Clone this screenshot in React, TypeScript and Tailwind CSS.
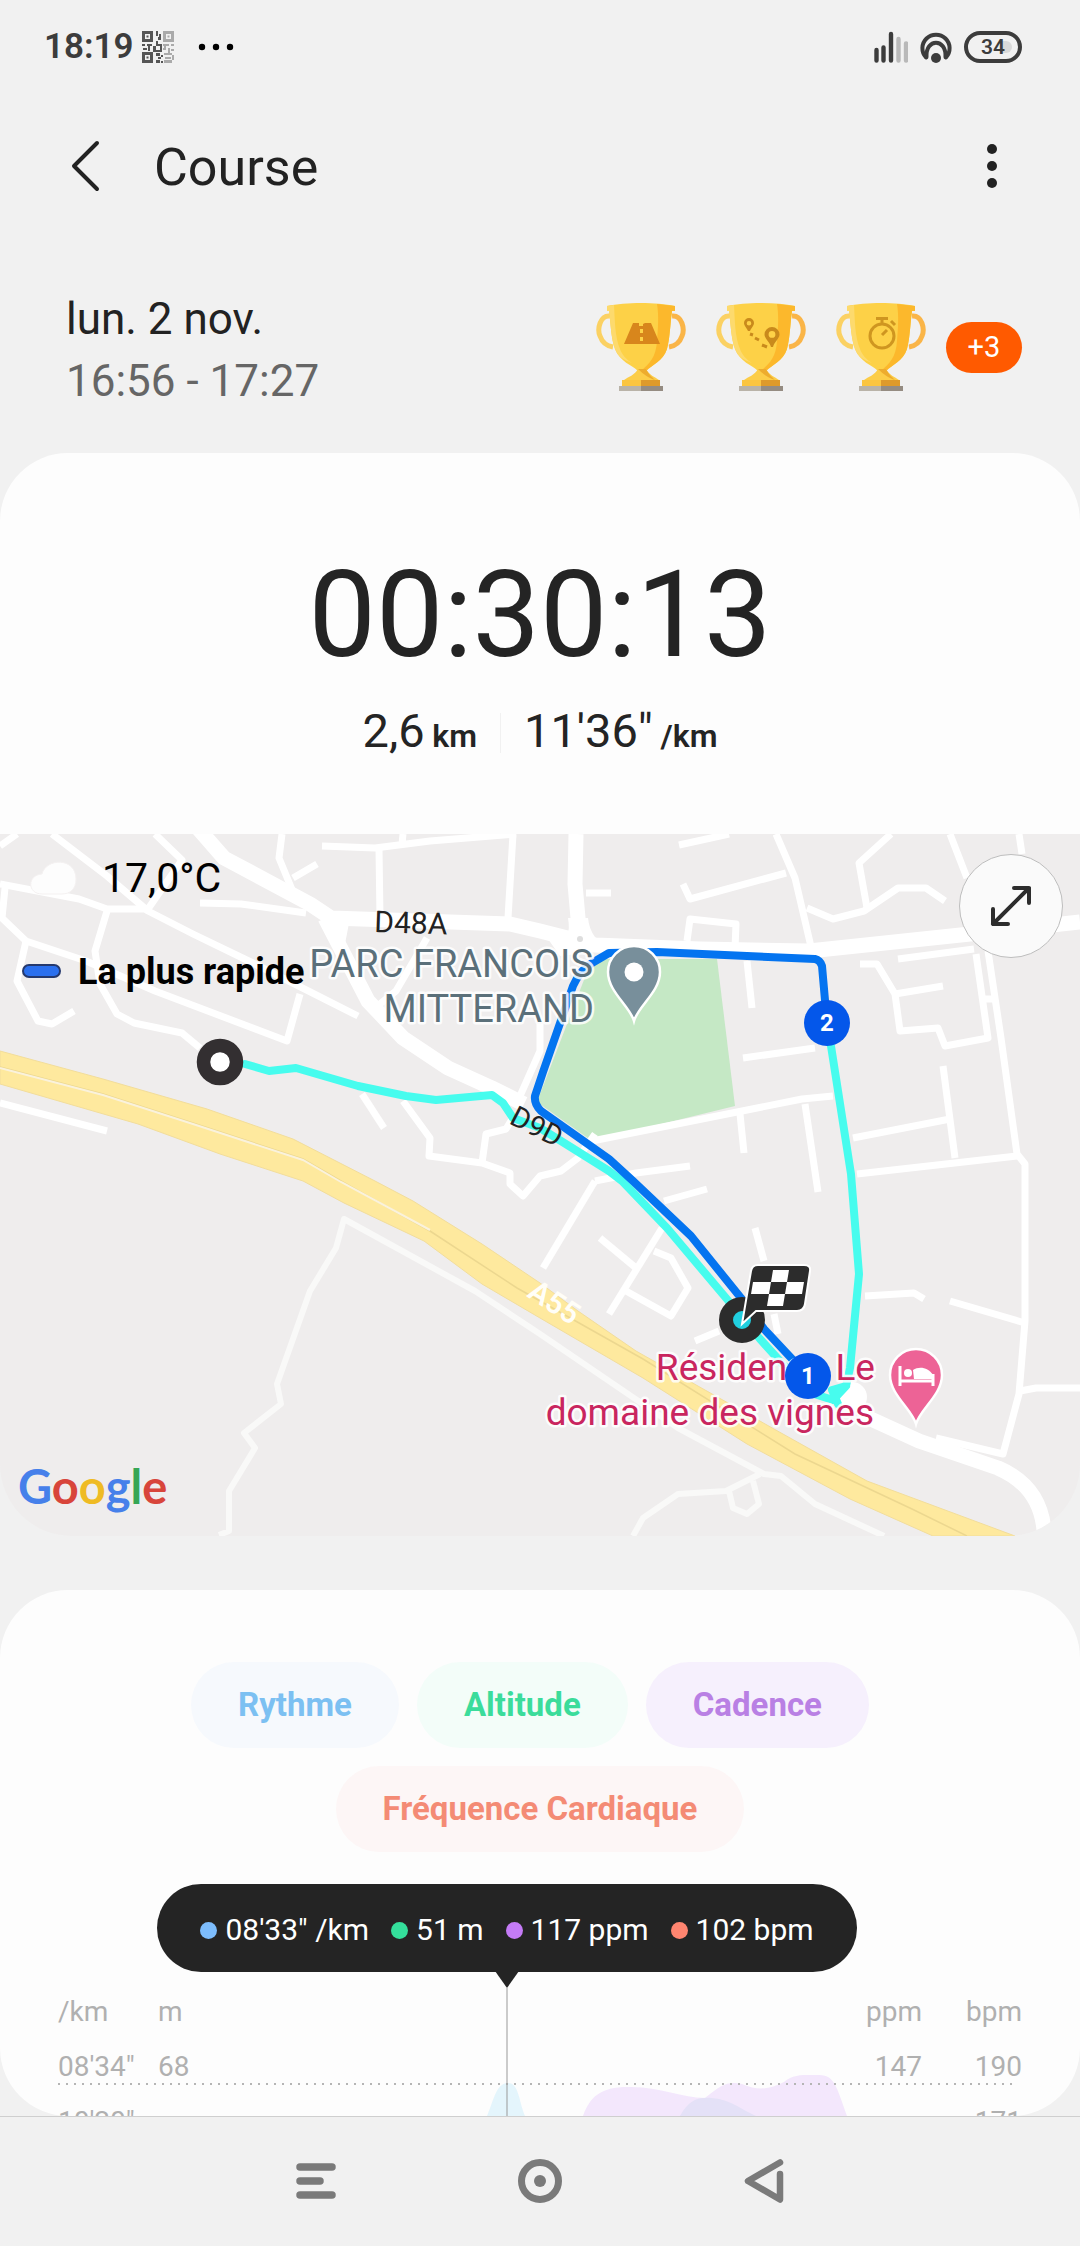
import { useState, type ReactNode } from "react";

type Emblem = "road" | "route" | "timer";

const emblems: Record<Emblem, ReactNode> = {
  road: (
    <path
      fill="#d8861c"
      d="M37 20h6v3h4v-2l2-1h6l9 21H28zM44 26v4h3v-4zM44 34v4h3v-4z"
      fillRule="evenodd"
    />
  ),
  route: (
    <g fill="#c98a1c">
      <path
        fillRule="evenodd"
        d="M33 15a5 5 0 0 1 5 5c0 3-3 5-4 8h-2c-1-3-4-5-4-8a5 5 0 0 1 5-5zm0 3a2.300 2.300 0 1 0 0 4.600 2.300 2.300 0 0 0 0-4.600z"
      />
      <path
        fillRule="evenodd"
        d="M56 24a7.500 7.500 0 0 1 7.500 7.500c0 4-5 7-6.500 12.500h-2c-1.500-5.500-6.500-8.500-6.500-12.500A7.500 7.500 0 0 1 56 24zm0 4a3.400 3.400 0 1 0 0 6.800 3.400 3.400 0 0 0 0-6.800z"
      />
      <path d="M34 31l3 1M39 35l4 2M46 42l5 2" stroke="#c98a1c" strokeWidth="3" />
    </g>
  ),
  timer: (
    <g fill="none" stroke="#cf9620" strokeWidth="3">
      <circle cx="46" cy="33" r="12" />
      <path d="M40 15.500h12M46 16v5M55 18l4 4M46 32l5-5" />
    </g>
  ),
};

function Trophy({ emblem }: { emblem: Emblem }) {
  return (
    <svg viewBox="0 0 90 88" className="w-[90px] h-[88px]" aria-hidden="true">
      <g fill="none" strokeWidth="5">
        <path d="M14 13C4 12 1 26 4 33c2 6 7 10 13 11" stroke="#fbd162" />
        <path d="M76 13c10-1 13 13 10 20-2 6-7 10-13 11" stroke="#fab548" />
      </g>
      <path d="M11 3C30-1 60-1 79 3v5h-3c-2 15-2 27-5 38-4 12-15 16-21 22h-8c-6-6-18-9-23-22-4-11-4-23-6-38h-2z" fill="#fdd147" />
      <path d="M11 3l7-1c1 18 1 32 6 44 2 6 7 11 12 14-8-3-14-6-17-14C15 35 15 23 13 8h-2z" fill="#fdda6d" />
      <path d="M61 1l18 2v5h-3c-2 15-2 27-5 38-4 12-15 16-21 22h-5c9-8 15-14 16-30 1-12 2-25 0-37z" fill="#fcb82c" />
      <path d="M42 66h8c3 6 9 8 13 11H28c4-3 11-5 14-11z" fill="#fccd48" />
      <path d="M42 66h8c3 6 6 8 9 11-6-2-11-5-17-11z" fill="#edac2e" />
      <path d="M26 77h19v6H26z" fill="#fbc540" />
      <path d="M45 77h19v6H45z" fill="#de9a2b" />
      <path d="M23 83h22v5H23z" fill="#b9b3a8" />
      <path d="M45 83h22v5H45z" fill="#958c82" />
      {emblems[emblem]}
    </svg>
  );
}

function QrIcon() {
  return (
    <svg viewBox="0 0 32 32" className="w-8 h-8" aria-hidden="true">
      <g fill="none" strokeWidth="3">
        <path d="M1.500 1.500h8v8h-8zM1.500 22.500h8v8h-8z" stroke="#555" />
        <path d="M22.500 1.500h8v8h-8z" stroke="#aaa" />
      </g>
      <path d="M4.500 4.500h2v2h-2zM4.500 25.500h2v2h-2z" fill="#555" />
      <path d="M25.500 4.500h2v2h-2z" fill="#aaa" />
      <path
        d="M14 0h2v5h-2zM17 3h2v6h-3v-3h1zM0 13h3v2H0zM1 17h4v2H1zM5 13h5v2H8v5H6v-5H5zM11 15h3v4h4v-4h-4v-2h6v8h-9zM14 10h2v3h-2zM14 22h4v3h-4zM16 26h3v2h-3zM14 29h4v3h-4zM19 24h2v2h-2zM19 30h2v2h-2z"
        fill="#555"
      />
      <path
        d="M21 13h6v2h-3v4h-3v-2h1v-2h-1zM29 13h3v2h-3zM26 17h2v5h-2zM29 18h3v2h-3zM22 22h8v2h-8zM30 24h2v5h-2zM23 26h6v2h-6zM22 29h8v3h-8z"
        fill="#aaa"
      />
    </svg>
  );
}

function StatusBar() {
  return (
    <div className="flex items-center justify-between px-11 pt-[27px] h-[67px]">
      <div className="flex items-center">
        <span className="text-[35px] leading-10 font-semibold text-[#3c3c3c]">18:19</span>
        <span className="ml-2">
          <QrIcon />
        </span>
        <svg viewBox="0 0 36 8" className="w-9 h-2 ml-6" aria-hidden="true">
          <circle cx="4" cy="4" r="3.200" />
          <circle cx="18" cy="4" r="3.200" />
          <circle cx="32" cy="4" r="3.200" />
        </svg>
      </div>
      <div className="flex items-center gap-3 mr-[14px]">
        <svg viewBox="0 0 34 32" className="w-[34px] h-8" aria-hidden="true">
          <g strokeWidth="4.400" strokeLinecap="round" stroke="#3c3c3c">
            <path d="M2.500 19v10.500M9.500 16.500v13M17 3v26.500" />
            <path d="M24.500 8v21.500M32 12.500v17" stroke="#b9b9b9" />
          </g>
        </svg>
        <svg viewBox="0 0 32 32" className="w-8 h-8" aria-hidden="true">
          <g fill="none" stroke="#3c3c3c" strokeWidth="4" strokeLinecap="round">
            <path d="M6 26.500A13.600 13.600 0 1 1 26 26.500" />
            <path d="M6.500 26C5.500 7 26.500 7 25.500 26" />
          </g>
          <circle cx="16" cy="27" r="5" fill="#3c3c3c" />
        </svg>
        <div className="relative flex items-center justify-center w-[58px] h-8 rounded-full border-4 border-[#3c3c3c]">
          <span className="absolute right-1.5 w-3 h-3 rounded-r-full bg-[#d9d9d9]" />
          <span className="relative text-[21px] leading-6 font-semibold text-[#3c3c3c]">34</span>
        </div>
      </div>
    </div>
  );
}

function Header() {
  return (
    <header className="flex items-center px-[62px] py-[68px] h-[198px] text-[#222]">
      <button aria-label="Retour" className="w-[46px] h-16 flex items-center">
        <svg viewBox="0 0 46 56" className="w-[46px] h-14" fill="none" aria-hidden="true">
          <path d="M35 5L12 28l23 23" stroke="#222" strokeWidth="4" strokeLinecap="round" strokeLinejoin="round" />
        </svg>
      </button>
      <h1 className="ml-[46px] pt-1 text-[52px] leading-[60px]">Course</h1>
      <button aria-label="Plus d'options" className="ml-auto w-[52px] h-16 flex items-center justify-center">
        <svg viewBox="0 0 12 46" className="w-3 h-[46px]" fill="#222" aria-hidden="true">
          <circle cx="6" cy="6" r="5" />
          <circle cx="6" cy="23" r="5" />
          <circle cx="6" cy="40" r="5" />
        </svg>
      </button>
    </header>
  );
}

const minorRoads = [
  "M52 0L107 42L148 77L193 100L255 130L358 182",
  "M0 50L79 65L107 75L148 75L182 26L155 0",
  "M107 77L95 117L100 150L117 180L134 189L182 199L200 214",
  "M5 54L2 84L26 107L86 127L155 157L287 207L300 160",
  "M26 107L17 147L38 187L52 190L74 177",
  "M0 12L17 0",
  "M282 0L279 24L293 58M293 44L317 30",
  "M200 69L241 70L306 79",
  "M322 12L375 14L430 7L516 0M402 10L403 0",
  "M379 15L380 84M513 0L508 84",
  "M427 104L396 157L375 174",
  "M540 190L540 217L520 262",
  "M362 260L384 294",
  "M403 267L430 304L429 322L482 329L510 339L510 350L523 362L540 342L561 337L578 324L595 300",
  "M482 329L486 300L506 295L514 282",
  "M0 269L107 297",
  "M679 11L729 0",
  "M683 50L690 65L786 39",
  "M776 0L795 44L812 117",
  "M807 74L833 85L864 77L898 54L926 54L945 67",
  "M891 0L859 29L867 74",
  "M950 0L967 44M1019 0L1022 20",
  "M586 59L611 59",
  "M687 107L690 85L736 90L735 114",
  "M747 127L752 174",
  "M860 130L877 130L895 160L943 152M895 160L900 197L938 194L945 212L988 204L976 120M898 125L974 115",
  "M988 117L1001 204L1017 320L1025 330L1025 487L1019 560L1003 620L936 604",
  "M984 165L996 165",
  "M1020 557L1036 554L1080 554",
  "M743 224L815 214",
  "M592 307L802 265L833 262",
  "M740 280L744 319M805 270L818 358",
  "M853 304L950 285M943 232L955 324M857 340L1017 322",
  "M595 347L636 339L690 332",
  "M595 347L543 434",
  "M664 367L707 355M662 394L609 480M600 404L636 434",
  "M654 417L671 424L688 454L671 482L626 457",
  "M755 394L764 427M774 480L778 500M695 507L719 497",
  "M865 462L914 459L924 465M950 467L1025 489",
];

const tracks = [
  "M219 701L229 697L229 657L255 614L244 599L281 570L277 550L310 457L336 414L344 385L475 457L540 500L678 594L764 640L781 642L815 670L884 702",
  "M633 702L643 684L678 660L726 657L760 640M729 657L733 674L747 680L759 670L753 647",
];

const arterials = [
  "M196 -8L224 24L310 70L331 84L510 90L540 97L595 111L700 115L809 117L970 100L1080 88",
  "M325 84L368 167L403 204L448 234L492 254L524 270",
  "M576 0L575 50L581 118",
  "M860 580L919 607L998 634Q1040 652 1044 696",
];

const halo = {
  stroke: "#ffffff",
  strokeWidth: 5,
  strokeOpacity: 0.85,
  paintOrder: "stroke" as const,
  strokeLinejoin: "round" as const,
};

function PlacePin({ x, y, color, children }: { x: number; y: number; color: string; children: ReactNode }) {
  return (
    <g transform={`translate(${x} ${y})`}>
      <path
        d="M0 49C-4 34-26 20-26 0a26 26 0 0 1 52 0C26 20 4 34 0 49z"
        fill={color}
        stroke="#fff"
        strokeWidth="2.500"
      />
      {children}
    </g>
  );
}

function KmMarker({ x, y, label }: { x: number; y: number; label: string }) {
  return (
    <g>
      <circle cx={x} cy={y} r="23" fill="#0457ea" />
      <text x={x} y={y + 8} textAnchor="middle" fontSize="24" fontWeight="700" fill="#fff">
        {label}
      </text>
    </g>
  );
}

function RouteMap() {
  return (
    <svg viewBox="0 0 1080 702" className="block w-full" role="img" aria-label="Carte du parcours">
      <rect width="1080" height="702" fill="#efeded" />

      {/* park */}
      <path d="M592 125L717 125L735 272L592 307L537 268z" fill="#c5e8c5" />

      {/* streets */}
      <g fill="none" stroke="#fff" strokeLinejoin="round">
        {tracks.map((d) => (
          <path key={d} d={d} strokeWidth="6" stroke="#f9f9f8" />
        ))}
        {minorRoads.map((d) => (
          <path key={d} d={d} strokeWidth="7" />
        ))}
        {arterials.map((d) => (
          <path key={d} d={d} strokeWidth="15" />
        ))}
      </g>
      <path d="M568 84Q573 112 548 105L560 122L612 116Q590 106 588 84z" fill="#fff" />
      <path d="M320 78L350 84L345 110z" fill="#fff" />
      <circle cx="580" cy="105" r="3" fill="#dedede" />
      <circle cx="852" cy="563" r="15" fill="#fff" />

      {/* motorway */}
      <path
        d="M0 217L103 245L207 275L293 305L375 347L413 367L482 410L540 449L578 477L636 517L774 595L867 647L1015 702L933 702L850 665L747 610L643 544L540 484L482 450L424 407L344 369L303 347L220 320L138 290L0 250z"
        fill="#fee99e"
        stroke="#f2dd9b"
        strokeWidth="1"
      />
      <path
        d="M0 233L103 260L193 289L303 325L341 347L430 397L517 454L643 525L795 620L912 675L967 702"
        fill="none"
        stroke="#ecd78f"
        strokeWidth="1.500"
      />
      <path d="M0 234L103 261L193 290L303 326L341 348L430 396" fill="none" stroke="#faf2dc" strokeWidth="2" />
      <text transform="translate(526 462) rotate(33)" fontSize="30" fontWeight="600" fill="#fffef8">
        A55
      </text>

      {/* recorded track */}
      <g fill="none" strokeWidth="8" strokeLinejoin="round" strokeLinecap="round">
        <path
          d="M245 230L269 237L296 234L358 252L406 262L436 266L492 261L503 269L513 284L540 294L561 307L609 337L622 347L667 394L726 464L760 505L808 558L833 566L846 552M831 212L851 340L859 440L850 534L846 552L832 556L838 570"
          stroke="#47fcee"
        />
        <path
          d="M827 189L822 132Q820 126 815 125L657 118L609 119L592 129Q580 136 573 152L543 238L535 262Q534 270 541 277L609 325L633 347L691 402L741 464L764 495L808 542"
          stroke="#0474f0"
        />
      </g>

      <text transform="translate(374 98) rotate(2)" fontSize="30" fill="#222">
        D48A
      </text>
      <text transform="translate(508 289) rotate(27)" fontSize="29" fill="#222">
        D9D
      </text>
      <g fontSize="38" textAnchor="end" fill="#5b707a" {...halo}>
        <text x="593" y="143">PARC FRANCOIS</text>
        <text x="594" y="188">MITTERAND</text>
      </g>
      <g fontSize="37" textAnchor="end" fill="#c9265f" {...halo}>
        <text x="875" y="546">Résidence Le</text>
        <text x="874" y="591">domaine des vignes</text>
      </g>

      <PlacePin x={634} y={138} color="#788f9b">
        <circle r="9.500" fill="#fff" />
      </PlacePin>
      <PlacePin x={916} y={541} color="#ed6396">
        <path d="M-16-9v20M17-1v12M-17 6h35" stroke="#fff" strokeWidth="3" />
        <path d="M-3-5C3-9 12-8 17 0v4H-2z" fill="#fff" />
        <circle cx="-8" cy="-2" r="4" fill="#fff" />
      </PlacePin>

      <circle cx="220" cy="228" r="16.500" fill="#fff" stroke="#332f31" strokeWidth="13.500" />

      {/* finish flag */}
      <circle cx="742" cy="486" r="16" fill="#21cfdf" stroke="#2c2c2c" strokeWidth="14" />
      <path
        d="M742 490L751 437Q752 431 758 431L804 431Q811 431 810 437L805 470Q804 477 797 477L756 477z"
        fill="#2c2c2c"
        stroke="#fff"
        strokeWidth="2"
      />
      <path
        d="M773 436h16l-2 12h-16zM753 448h18l-2 12h-18zM787 448h17l-2 12h-17zM769 460h16l-2 12h-16z"
        fill="#fff"
      />
      <KmMarker x={827} y={189} label="2" />
      <KmMarker x={808} y={542} label="1" />
    </svg>
  );
}

function MapSection() {
  return (
    <section className="relative overflow-hidden rounded-b-[72px]">
      <RouteMap />
      <div className="absolute top-0 left-0 pt-5 pl-[22px]">
        <div className="flex items-center">
          <svg viewBox="0 0 48 34" className="w-12 h-[34px] ml-2" aria-hidden="true">
            <path
              d="M12 33C-3 33-3 14 12 13C16-3 46-4 46 18C46 28 40 33 32 33z"
              fill="#fdfdfd"
              stroke="#f4f1f1"
            />
          </svg>
          <span className="ml-6 text-[41px] leading-[48px] text-black">17,0°C</span>
        </div>
        <div className="flex items-center mt-12">
          <span className="w-[39px] h-[14px] rounded-full border-2 border-[#25396e] bg-[#2b70ee]" />
          <span className="ml-[17px] pt-0.5 text-[36px] leading-[40px] font-bold text-black">La plus rapide</span>
        </div>
      </div>
      <button
        aria-label="Agrandir la carte"
        className="absolute top-5 right-[17px] w-[104px] h-[104px] rounded-full border border-[#bdbdbd] bg-[#fafafa] flex items-center justify-center"
      >
        <svg viewBox="0 0 42 42" className="w-[42px] h-[42px]" fill="none" aria-hidden="true">
          <path
            d="M3 39L39 3M24 3h15v15M3 24v15h15"
            stroke="#2d2d2d"
            strokeWidth="4"
            strokeLinecap="round"
            strokeLinejoin="round"
          />
        </svg>
      </button>
      <a
        href="#google"
        aria-label="Google"
        className="absolute left-[18px] bottom-5 text-[47px] leading-[60px] font-bold font-['Lato',sans-serif]"
      >
        <span className="text-[#4680ea]">G</span>
        <span className="text-[#d8453b]">o</span>
        <span className="text-[#efbb24]">o</span>
        <span className="text-[#4680ea]">g</span>
        <span className="text-[#36a655]">l</span>
        <span className="text-[#d8453b]">e</span>
      </a>
    </section>
  );
}

function Summary() {
  return (
    <section className="rounded-t-[68px] bg-[#fdfdfd] pt-[92px] pb-[66px] h-[381px] text-[#242424]">
      <div className="text-center text-[120px] leading-[140px]">00:30:13</div>
      <div className="flex justify-center items-center mt-4 h-16">
        <p className="text-[47px] leading-[60px]">
          2,6 <span className="-ml-1 text-[32px] font-semibold">km</span>
        </p>
        <span className="w-px h-10 mx-[23px] bg-[#f1f1f1]" />
        <p className="text-[47px] leading-[60px]">
          11'36" <span className="-ml-1 text-[32px] font-semibold">/km</span>
        </p>
      </div>
    </section>
  );
}

const series = [
  { label: "Rythme", pill: "bg-[#f6f9fd] text-[#7cc0f2]", dot: "bg-[#7dbdfd]", value: "08'33\" /km" },
  { label: "Altitude", pill: "bg-[#f3fdf9] text-[#3bdc9b]", dot: "bg-[#34df9b]", value: "51 m" },
  { label: "Cadence", pill: "bg-[#f6f0fd] text-[#b980e4]", dot: "bg-[#c47bf6]", value: "117 ppm" },
  { label: "Fréquence Cardiaque", pill: "bg-[#fdf6f6] text-[#f48b75]", dot: "bg-[#ff8570]", value: "102 bpm" },
];

const scale = [
  ["/km", "m", "ppm", "bpm"],
  ["08'34\"", "68", "147", "190"],
  ["10'20\"", "", "", "171"],
];

function SeriesPill({ label, className }: { label: string; className: string }) {
  const [on, setOn] = useState(true);

  return (
    <button
      aria-pressed={on}
      onClick={() => setOn(!on)}
      className={`h-[86px] px-[47px] rounded-full text-[33px] leading-10 font-bold ${className} ${on ? "" : "opacity-50"}`}
    >
      {label}
    </button>
  );
}

function ChartCard() {
  return (
    <section className="flex-1 min-h-0 overflow-hidden mt-[54px] rounded-[68px] bg-[#fdfdfd] pt-[72px]">
      <div className="flex justify-center gap-[18px] pr-5">
        {series.slice(0, 3).map((s) => (
          <SeriesPill key={s.label} label={s.label} className={s.pill} />
        ))}
      </div>
      <div className="flex justify-center mt-[18px]">
        <SeriesPill label={series[3].label} className={series[3].pill} />
      </div>

      <div className="relative flex items-center justify-center gap-[22px] w-[700px] h-[88px] mt-[32px] ml-[157px] pt-1 rounded-full bg-[#242424]">
        {series.map((s) => (
          <span key={s.label} className="flex items-center gap-2 text-[30px] leading-9 text-white">
            <i className={`w-[17px] h-[17px] rounded-full ${s.dot}`} />
            {s.value}
          </span>
        ))}
        <svg viewBox="0 0 24 17" className="absolute top-[87px] left-[338px] w-6 h-[17px]" aria-hidden="true">
          <path d="M0 0h24L12 17z" fill="#242424" />
        </svg>
      </div>

      <div className="relative pt-3">
        <svg viewBox="0 0 1080 144" className="absolute top-0 left-0 w-full" aria-hidden="true">
          <path d="M487 144C494 128 496 111 508 111C519 111 519 130 525 144z" fill="#e4f5fc" />
          <path
            d="M583 144C590 125 600 115 628 115C658 114 682 126 705 126C722 112 728 109 742 112C760 120 772 116 784 110C792 103 800 103 812 103C834 102 834 107 847 144z"
            fill="#f3e7fc"
          />
          <path d="M680 144C690 126 700 125 712 126C732 128 742 138 756 144z" fill="#e4e1f7" />
          <path d="M58 112H1018" stroke="#b5b5b5" strokeWidth="2" strokeDasharray="2 6" />
          <path d="M507 16V144" stroke="#999" strokeWidth="1" />
        </svg>
        <table className="relative w-full text-[28px] leading-[55px] text-[#b0b0b0]">
          <tbody>
            {scale.map(([pace, altitude, cadence, heart]) => (
              <tr key={pace}>
                <td className="w-[158px] pl-[58px]">{pace}</td>
                <td>{altitude}</td>
                <td className="text-right">{cadence}</td>
                <td className="w-[158px] pr-[58px] text-right">{heart}</td>
              </tr>
            ))}
          </tbody>
        </table>
      </div>
    </section>
  );
}

function NavBar() {
  return (
    <nav className="flex justify-center gap-[158px] h-[130px] pt-[32px] border-t border-[#cfcfcf] bg-[#f1f1f1]">
      <button aria-label="Applications récentes" className="w-[66px] h-16 flex items-center justify-center">
        <svg viewBox="0 0 40 36" className="w-10 h-9" stroke="#7a7a7a" strokeWidth="7.500" strokeLinecap="round" aria-hidden="true">
          <path d="M4 4h32M4 18h20M4 32h32" />
        </svg>
      </button>
      <button aria-label="Accueil" className="w-[66px] h-16 flex items-center justify-center">
        <svg viewBox="0 0 44 44" className="w-11 h-11" aria-hidden="true">
          <circle cx="22" cy="22" r="18.500" fill="none" stroke="#7a7a7a" strokeWidth="7" />
          <circle cx="22" cy="22" r="6" fill="#7a7a7a" />
        </svg>
      </button>
      <button aria-label="Retour système" className="w-[66px] h-16 flex items-center justify-center">
        <svg viewBox="0 0 40 46" className="w-10 h-[46px]" fill="none" aria-hidden="true">
          <path
            d="M36 4.500L4 23l32 18.500V16"
            stroke="#7a7a7a"
            strokeWidth="6.500"
            strokeLinecap="round"
            strokeLinejoin="round"
          />
        </svg>
      </button>
    </nav>
  );
}

export default function App() {
  return (
    <div className="flex flex-col h-screen overflow-hidden bg-[#f1f1f1] font-['Roboto',sans-serif]">
      <StatusBar />
      <Header />
      <div className="flex items-start justify-between pl-[66px] pr-[58px] pt-[23px] h-[188px]">
        <div className="text-[44px] leading-[62px] text-[#666]">
          <p className="text-[#222]">lun. 2 nov.</p>
          <p>16:56 - 17:27</p>
        </div>
        <div className="flex items-center pt-[15px]">
          <div className="flex gap-[30px]">
            <Trophy emblem="road" />
            <Trophy emblem="route" />
            <Trophy emblem="timer" />
          </div>
          <button className="ml-5 w-[76px] h-[51px] rounded-full bg-[#ff5a00] text-[29px] leading-8 text-white">
            +3
          </button>
        </div>
      </div>
      <Summary />
      <MapSection />
      <ChartCard />
      <NavBar />
    </div>
  );
}
